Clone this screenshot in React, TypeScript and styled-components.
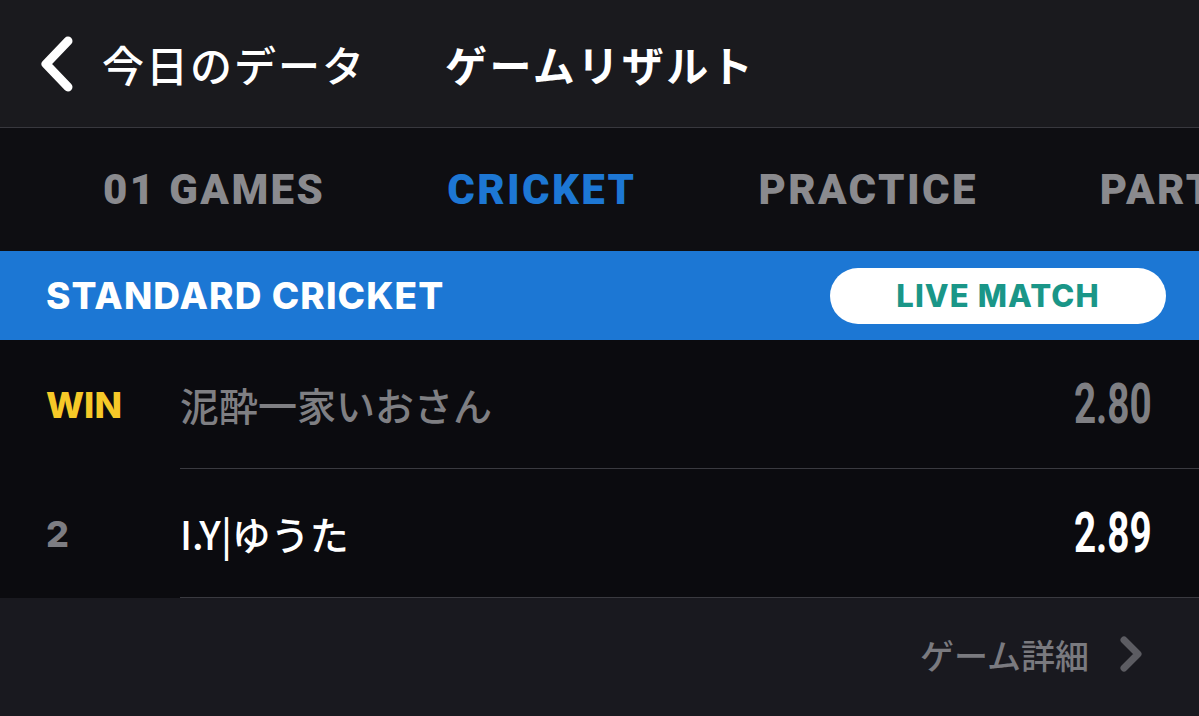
import styled, { createGlobalStyle } from 'styled-components';

const GlobalStyle = createGlobalStyle`
  html, body {
    margin: 0;
    padding: 0;
    background: #0b0b0f;
    overflow: hidden;
  }
`;

const jp = `"Noto Sans CJK JP", "Noto Sans", sans-serif`;
const latin = `Inter, "Noto Sans", sans-serif`;

const Screen = styled.div`
  width: 1199px;
  height: 716px;
  display: flex;
  flex-direction: column;
  background: #0b0b0f;
`;

const Header = styled.header`
  height: 127px;
  flex-shrink: 0;
  display: flex;
  align-items: center;
  padding-left: 36px;
  background: #1a1a1e;
  border-bottom: 1px solid #38383e;
`;

const BackButton = styled.div`
  display: flex;
  align-items: center;
  gap: 26px;
  width: 409px;
  color: #fff;
`;

const BackLabel = styled.span`
  font-family: ${jp};
  font-size: 42px;
  font-weight: 500;
  letter-spacing: 2px;
`;

const Title = styled.h1`
  margin: 0;
  font-family: ${jp};
  font-size: 42px;
  font-weight: 700;
  letter-spacing: 2.5px;
  color: #fff;
`;

const Tabs = styled.nav`
  height: 123px;
  flex-shrink: 0;
  display: flex;
  align-items: center;
  gap: 122px;
  padding-left: 103px;
  background: #0e0e12;
  overflow: hidden;
  white-space: nowrap;
`;

const Tab = styled.span<{ $active?: boolean }>`
  font-family: Roboto, sans-serif;
  font-size: 42px;
  font-weight: 900;
  letter-spacing: 2.4px;
  color: ${(p) => (p.$active ? '#1d77d4' : '#8a8a8e')};
`;

const GameBar = styled.div`
  height: 89px;
  flex-shrink: 0;
  display: flex;
  align-items: center;
  justify-content: space-between;
  padding: 0 33px 0 46px;
  background: #1c77d4;
`;

const GameName = styled.span`
  font-family: ${latin};
  font-size: 37px;
  font-weight: 800;
  letter-spacing: 1.1px;
  color: #fff;
`;

const LivePill = styled.span`
  width: 336px;
  height: 56px;
  display: flex;
  align-items: center;
  justify-content: center;
  border-radius: 28px;
  background: #fff;
  font-family: ${latin};
  font-size: 31px;
  font-weight: 800;
  letter-spacing: 1.1px;
  color: #1a9688;
`;

const List = styled.div`
  display: flex;
  flex-direction: column;
  background: #0b0b0f;
`;

const Row = styled.div`
  height: 129px;
  display: flex;
  align-items: stretch;
  padding-left: 46px;
`;

const Rank = styled.span<{ $win?: boolean }>`
  width: 134px;
  flex-shrink: 0;
  display: flex;
  align-items: center;
  font-family: ${latin};
  font-size: 36px;
  font-weight: 800;
  color: ${(p) => (p.$win ? '#f6c928' : '#7d7d82')};
`;

const RowBody = styled.div`
  flex: 1;
  display: flex;
  align-items: center;
  justify-content: space-between;
  padding-right: 47px;
  border-bottom: 1px solid #3a3a40;
`;

const PlayerName = styled.span<{ $dim?: boolean }>`
  font-family: ${jp};
  font-size: 39px;
  font-weight: 500;
  color: ${(p) => (p.$dim ? '#7f7f83' : '#ffffff')};
`;

const Score = styled.span<{ $dim?: boolean }>`
  display: inline-block;
  font-family: Roboto, sans-serif;
  font-size: 56px;
  font-weight: 700;
  transform: scaleX(0.69);
  transform-origin: right center;
  color: ${(p) => (p.$dim ? '#7f7f83' : '#ffffff')};
`;

const Footer = styled.footer`
  flex: 1;
  display: flex;
  align-items: center;
  justify-content: flex-end;
  gap: 30px;
  padding: 0 56px 6px 0;
  background: #19191f;
`;

const DetailLabel = styled.span`
  font-family: ${jp};
  font-size: 34px;
  font-weight: 500;
  color: #7a7a7f;
`;

const players = [
  { rank: 'WIN', win: true, name: '泥酔一家いおさん', score: '2.80', dim: true },
  { rank: '2', win: false, name: 'I.Y|ゆうた', score: '2.89', dim: false },
];

export default function App() {
  return (
    <Screen>
      <GlobalStyle />
      <Header>
        <BackButton>
          <svg width="40" height="58" viewBox="0 0 40 58">
            <path d="M32 6 L10 29 L32 52" fill="none" stroke="#fff" strokeWidth="9" strokeLinecap="round" strokeLinejoin="round" />
          </svg>
          <BackLabel>今日のデータ</BackLabel>
        </BackButton>
        <Title>ゲームリザルト</Title>
      </Header>
      <Tabs>
        <Tab>01 GAMES</Tab>
        <Tab $active>CRICKET</Tab>
        <Tab>PRACTICE</Tab>
        <Tab>PARTY</Tab>
      </Tabs>
      <GameBar>
        <GameName>STANDARD CRICKET</GameName>
        <LivePill>LIVE MATCH</LivePill>
      </GameBar>
      <List>
        {players.map((p) => (
          <Row key={p.rank}>
            <Rank $win={p.win}>{p.rank}</Rank>
            <RowBody>
              <PlayerName $dim={p.dim}>{p.name}</PlayerName>
              <Score $dim={p.dim}>{p.score}</Score>
            </RowBody>
          </Row>
        ))}
      </List>
      <Footer>
        <DetailLabel>ゲーム詳細</DetailLabel>
        <svg width="24" height="36" viewBox="0 0 24 36">
          <path d="M5 4 L19 18 L5 32" fill="none" stroke="#5c5c62" strokeWidth="7" strokeLinecap="round" strokeLinejoin="round" />
        </svg>
      </Footer>
    </Screen>
  );
}
